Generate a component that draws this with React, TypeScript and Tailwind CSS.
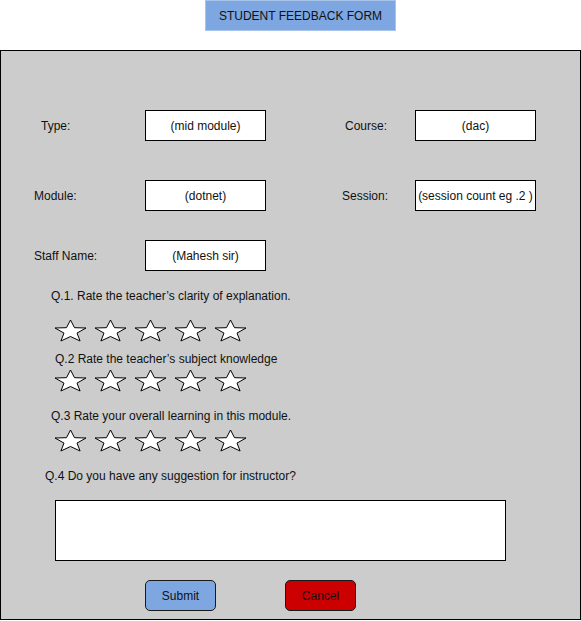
import React from "react";

const Star = () => (
  <svg width="33" height="23" viewBox="0 0 33 23" className="block">
    <polygon
      points="16.5,1 20.5,8.7 32,9 23,14.1 26.1,22 16.5,17.5 6.9,22 10,14.1 1,9 12.5,8.7"
      fill="#ffffff"
      stroke="#000000"
      strokeWidth="1"
      strokeLinejoin="miter"
    />
  </svg>
);

const Stars = ({ className }: { className: string }) => (
  <div className={`flex gap-[7px] ${className}`}>
    {[0, 1, 2, 3, 4].map((i) => (
      <Star key={i} />
    ))}
  </div>
);

const Field = ({ value }: { value: string }) => (
  <div className="w-[121px] h-[31px] bg-white border border-black flex items-center justify-center whitespace-nowrap">
    {value}
  </div>
);

export default function App() {
  return (
    <div className="w-[581px] h-[621px] bg-white font-['Liberation_Sans',Arial,sans-serif] text-[12px] leading-[14px] text-[#111]">
      {/* title */}
      <div className="ml-[205px] w-[191px] h-[31px] bg-[#7ea6e0] border border-[#a9c4eb] flex items-center justify-center">
        STUDENT FEEDBACK FORM
      </div>

      {/* form panel */}
      <div className="mt-[19px] w-[581px] h-[570px] bg-[#cccccc] border border-black">
        <div className="mt-[59px] flex items-center">
          <div className="w-[144px] pl-[40px]">Type:</div>
          <Field value="(mid module)" />
          <div className="w-[149px] pl-[79px]">Course:</div>
          <Field value="(dac)" />
        </div>

        <div className="mt-[39px] flex items-center">
          <div className="w-[144px] pl-[33px]">Module:</div>
          <Field value="(dotnet)" />
          <div className="w-[149px] pl-[76px]">Session:</div>
          <Field value="(session count eg .2 )" />
        </div>

        <div className="mt-[29px] flex items-center">
          <div className="w-[144px] pl-[33px]">Staff Name:</div>
          <Field value="(Mahesh sir)" />
        </div>

        <p className="mt-[18px] pl-[50px]">Q.1. Rate the teacher’s clarity of explanation.</p>
        <Stars className="mt-[16px] pl-[53px]" />

        <p className="mt-[10px] pl-[54px]">Q.2 Rate the teacher’s subject knowledge</p>
        <Stars className="mt-[3px] pl-[53px]" />

        <p className="mt-[17px] pl-[50px]">Q.3 Rate your overall learning in this module.</p>
        <Stars className="mt-[6px] pl-[53px]" />

        <p className="mt-[17px] pl-[44px]">Q.4 Do you have any suggestion for instructor?</p>

        <div className="mt-[17px] ml-[54px] w-[451px] h-[61px] bg-white border border-black" />

        <div className="mt-[19px] ml-[144px] flex gap-[69px]">
          <button className="w-[71px] h-[31px] rounded-[5px] bg-[#7ea6e0] border border-[#1a1a1a] flex items-center justify-center">
            Submit
          </button>
          <button className="w-[71px] h-[31px] rounded-[5px] bg-[#cc0000] border border-[#1a1a1a] flex items-center justify-center">
            Cancel
          </button>
        </div>
      </div>
    </div>
  );
}
